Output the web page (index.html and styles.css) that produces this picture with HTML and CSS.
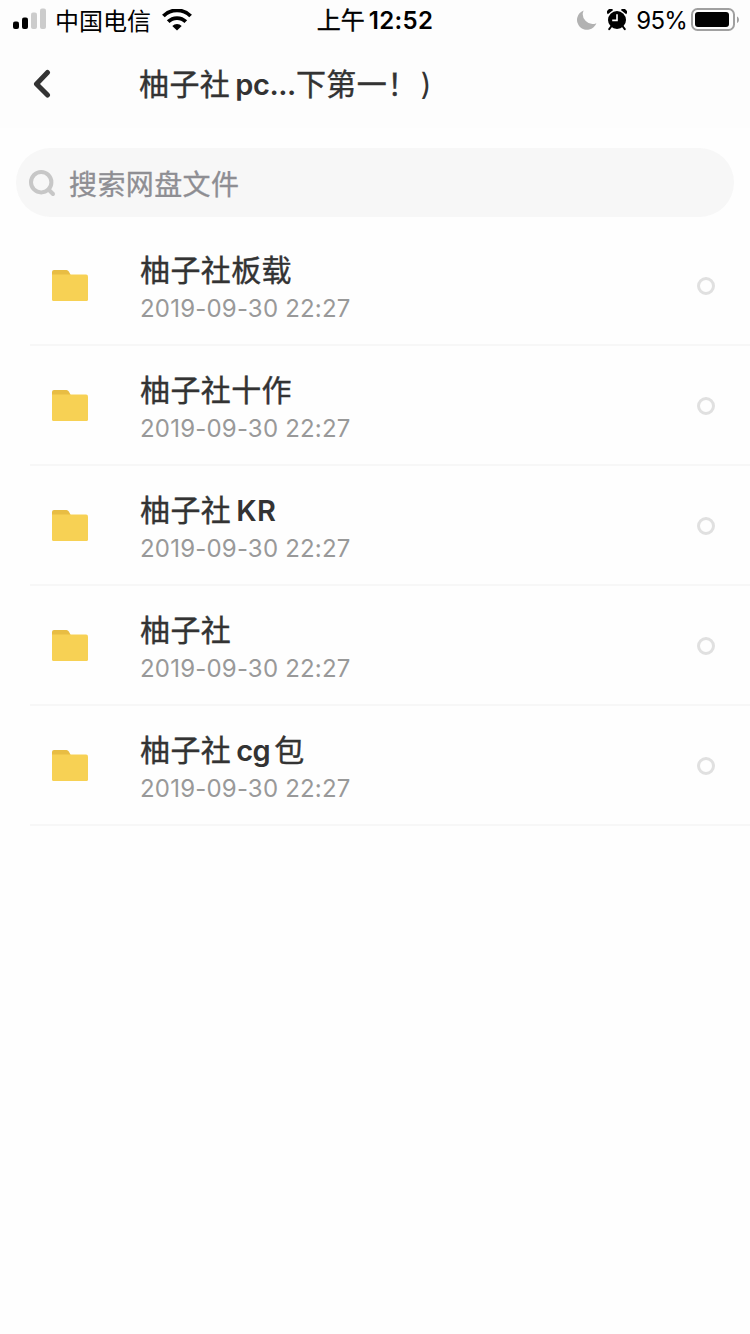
FILE: index.html
```html
<!DOCTYPE html>
<html lang="zh-CN">
<head>
<meta charset="utf-8">
<title>网盘文件</title>
<link rel="stylesheet" href="styles.css">
</head>
<body>
<div class="top">
  <div class="status">
    <div class="status-left">
      <svg class="signal" width="34" height="22" viewBox="0 0 34 22"><rect x="0" y="13.5" width="6" height="7.500" rx="2"/><rect x="9" y="9.5" width="6" height="11.5" rx="2"/><rect class="dim" x="18" y="4.5" width="6" height="16.5" rx="2"/><rect class="dim" x="27" y="0.5" width="6" height="20.5" rx="2"/></svg>
      <span class="carrier">中国电信</span>
      <svg class="wifi" width="30" height="22" viewBox="0 0 30 22"><path d="M1.400 7A19.2 19.2 0 0 1 28.6 7" /><path d="M6.2 12.700A12.400 12.400 0 0 1 23.8 12.700"/><path class="dot" d="M15 21.600L10.300 17A6.800 6.800 0 0 1 19.700 17Z"/></svg>
    </div>
    <div class="clock"><span class="ampm">上午</span><span class="time">12:52</span></div>
    <div class="status-right">
      <svg class="moon" width="20" height="20" viewBox="0 0 20 20"><path d="M6.600.4A10 10 0 1 0 19.400 13.200A9.800 9.800 0 0 1 6.600.4Z"/></svg>
      <svg class="alarm" width="20" height="22" viewBox="0 0 20 22"><circle cx="10" cy="11" r="9"/><path d="M.8 5.200A3.300 3.300 0 0 1 6.200 1.100ZM19.200 5.200A3.300 3.300 0 0 0 13.800 1.100Z"/><path class="leg" d="M4.200 17.500L2.200 20.200M15.800 17.500L17.800 20.200"/><path class="hand" d="M10 5.200V11.400H5.200"/></svg>
      <span class="percent">95%</span>
      <svg class="battery" width="49" height="24" viewBox="0 0 49 24"><rect class="case" x="1" y="1" width="42" height="21" rx="5.5"/><rect x="4" y="4" width="34" height="15" rx="3"/><path class="cap" d="M46 8.500C48.600 9.300 48.600 14 46 15Z"/></svg>
    </div>
  </div>
  <div class="nav">
    <svg class="back" width="18" height="30" viewBox="0 0 18 30"><path d="M14.500 3.500L3.500 15L14.500 26"/></svg>
    <h1 class="title">柚子社<span class="latin pc">pc...</span>下第一<span>！</span><span class="paren">)</span></h1>
  </div>
</div>
<div class="search">
  <svg class="glass" width="27" height="27" viewBox="0 0 27 27"><circle cx="12.200" cy="12.200" r="10.200"/><path d="M19.500 19.500L24 24"/></svg>
  <span class="hint">搜索网盘文件</span>
</div>
<div class="list">
  <div class="row"><svg class="folder" width="36" height="32" viewBox="0 0 36 32"><path class="tab" d="M0 10V2Q0 0 2 0H14.500Q16 0 16.800 1.500L18.500 4.500V10Z"/><path class="front" d="M0 4.500H34Q36 4.500 36 6.500V29.500Q36 31 34.500 31H1.500Q0 31 0 29.500Z"/></svg><div class="info"><div class="name">柚子社板载</div><div class="date">2019-09-30 22:27</div></div><span class="pick"></span></div>
  <div class="row"><svg class="folder" width="36" height="32" viewBox="0 0 36 32"><path class="tab" d="M0 10V2Q0 0 2 0H14.500Q16 0 16.800 1.500L18.500 4.500V10Z"/><path class="front" d="M0 4.500H34Q36 4.500 36 6.500V29.500Q36 31 34.500 31H1.500Q0 31 0 29.500Z"/></svg><div class="info"><div class="name">柚子社十作</div><div class="date">2019-09-30 22:27</div></div><span class="pick"></span></div>
  <div class="row"><svg class="folder" width="36" height="32" viewBox="0 0 36 32"><path class="tab" d="M0 10V2Q0 0 2 0H14.500Q16 0 16.800 1.500L18.500 4.500V10Z"/><path class="front" d="M0 4.500H34Q36 4.500 36 6.500V29.500Q36 31 34.500 31H1.500Q0 31 0 29.500Z"/></svg><div class="info"><div class="name">柚子社<span class="latin">KR</span></div><div class="date">2019-09-30 22:27</div></div><span class="pick"></span></div>
  <div class="row"><svg class="folder" width="36" height="32" viewBox="0 0 36 32"><path class="tab" d="M0 10V2Q0 0 2 0H14.500Q16 0 16.800 1.500L18.500 4.500V10Z"/><path class="front" d="M0 4.500H34Q36 4.500 36 6.500V29.500Q36 31 34.500 31H1.500Q0 31 0 29.500Z"/></svg><div class="info"><div class="name">柚子社</div><div class="date">2019-09-30 22:27</div></div><span class="pick"></span></div>
  <div class="row"><svg class="folder" width="36" height="32" viewBox="0 0 36 32"><path class="tab" d="M0 10V2Q0 0 2 0H14.500Q16 0 16.800 1.500L18.500 4.500V10Z"/><path class="front" d="M0 4.500H34Q36 4.500 36 6.500V29.500Q36 31 34.500 31H1.500Q0 31 0 29.500Z"/></svg><div class="info"><div class="name">柚子社<span class="latin cg">cg</span>包</div><div class="date">2019-09-30 22:27</div></div><span class="pick"></span></div>
</div>
</body>
</html>
```
FILE: styles.css
```css
* { box-sizing: border-box; }
body { margin: 0; height: 1334px; background: #fefefe; color: #333; font-family: Inter, "Noto Sans CJK SC", sans-serif; white-space: nowrap; overflow: hidden; }
svg { display: block; flex: none; }
.top { height: 128px; background: #fdfdfd; }
.status { display: grid; grid-template-columns: 1fr auto 1fr; height: 40px; color: #000; align-items: center; }
.status-left { display: flex; align-items: center; padding-left: 13px; }
.signal { margin-top: -2px; }
.signal .dim { fill: #ccc; }
.carrier { margin-left: 8px; padding-top: 3px; font-size: 24px; line-height: 37px; }
.wifi { margin-left: 11px; }
.wifi path { fill: none; stroke: #000; stroke-width: 3.8; }
.wifi .dot { fill: #000; stroke: none; }
.clock { display: flex; align-items: center; padding-top: 2px; line-height: 38px; }
.ampm { font-size: 24px; -webkit-text-stroke: .4px #000; }
.time { margin-left: 4px; font-size: 24px; font-weight: 600; letter-spacing: .3px; }
.status-right { display: flex; align-items: center; justify-content: flex-end; padding-right: 10px; }
.moon { fill: #b2b2b2; margin-right: 10px; }
.alarm { margin: -1px 9px 0 0; }
.alarm .leg { stroke: #000; stroke-width: 2; stroke-linecap: round; }
.alarm .hand { fill: none; stroke: #fff; stroke-width: 1.6; }
.percent { font-size: 24px; padding-top: 2px; line-height: 38px; letter-spacing: -.8px; margin-right: 4px; }
.battery .case { fill: none; stroke: #a0a0a0; stroke-width: 2; }
.battery .cap { fill: #a0a0a0; }
.nav { display: flex; align-items: center; height: 88px; padding-left: 33px; }
.back { fill: none; stroke: #333; stroke-width: 5; stroke-linecap: round; stroke-linejoin: round; }
.title { margin: 1px 0 0 88px; font-size: 30px; line-height: 44px; font-weight: 400; letter-spacing: .4px; -webkit-text-stroke: .4px #333; }
.latin { margin-left: 5px; font-size: 29px; font-weight: 600; -webkit-text-stroke: 0; }
.latin.pc { margin-left: 5px; letter-spacing: -.4px; }
.paren { font-weight: 400; margin-left: 3px; -webkit-text-stroke: 0; }
.latin.cg { margin-right: 4px; letter-spacing: -.5px; }
.search { display: flex; align-items: center; height: 69px; margin: 20px 16px 0; padding: 1px 0 0 13px; border-radius: 35px; background: #f7f7f7; }
.glass { fill: none; stroke: #c7c7c7; stroke-width: 4; stroke-linecap: round; }
.hint { margin: 3px 0 0 13px; color: #8e8e93; font-size: 28px; line-height: 40px; letter-spacing: .4px; -webkit-text-stroke: .3px #8e8e93; }
.list { margin: 9px 0 0 30px; }
.row { display: flex; align-items: center; height: 120px; padding: 2px 35px 0 22px; border-bottom: 2px solid #f7f7f7; }
.folder .tab { fill: #e8bd43; }
.folder .front { fill: #f7d154; }
.info { flex: 1; margin-left: 52px; padding-top: 2px; }
.name { height: 42px; font-size: 30px; line-height: 42px; letter-spacing: .4px; -webkit-text-stroke: .4px #333; }
.date { height: 34px; color: #999; font-size: 24px; line-height: 35px; letter-spacing: .2px; }
.pick { width: 18px; height: 18px; border: 3px solid #e0e0e0; border-radius: 50%; }
```
